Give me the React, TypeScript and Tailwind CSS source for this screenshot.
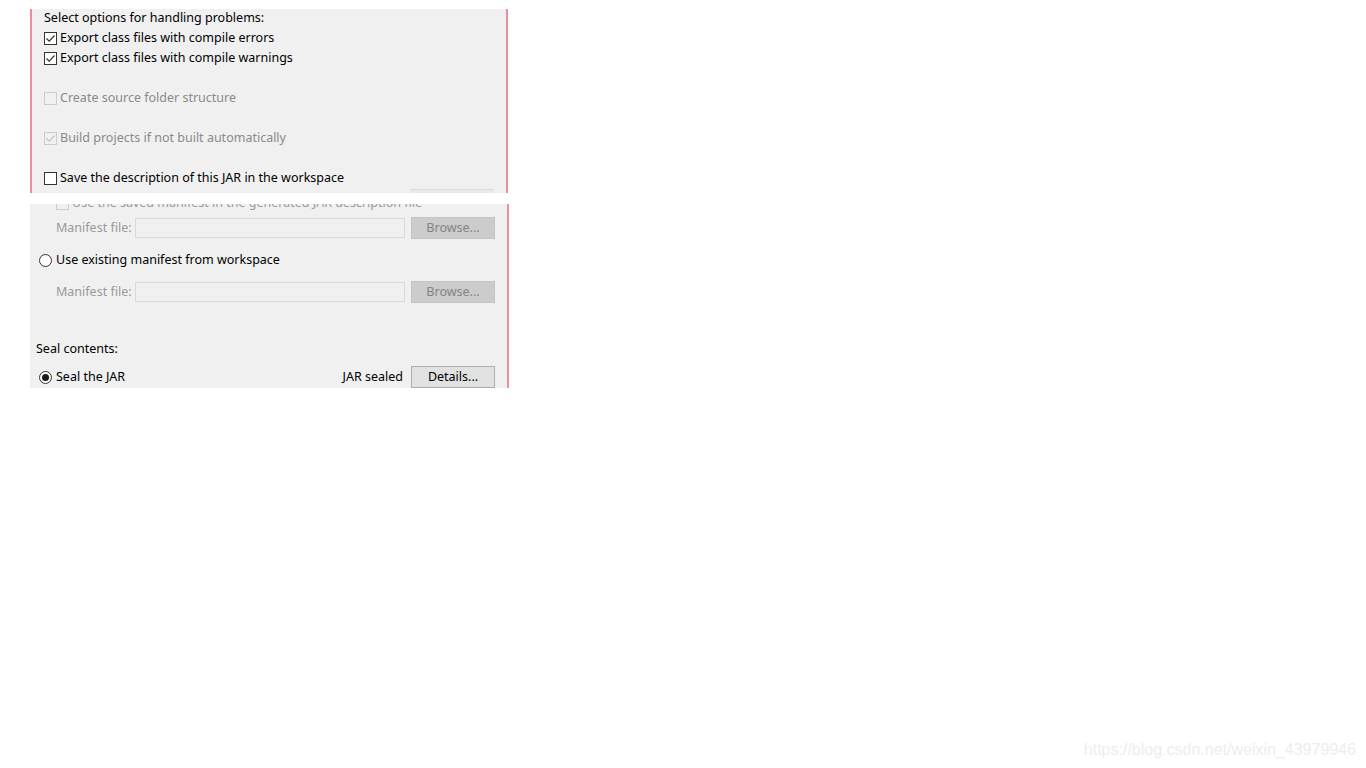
import React from "react";

const ui = { fontFamily: '"Noto Sans", "Open Sans", "Noto Sans CJK SC", sans-serif' };

function CheckBox({ checked, disabled }: { checked?: boolean; disabled?: boolean }) {
    return (
        <span
            className={
                "w-[13px] h-[13px] border flex items-center justify-center shrink-0 " +
                (disabled ? "border-[#cccccc] bg-[#f0f0f0]" : "border-[#333333] bg-white")
            }
        >
            {checked && (
                <svg width="11" height="11" viewBox="0 0 11 11">
                    <path
                        d="M1.5 5.5 L4.2 8.2 L9.5 2.5"
                        fill="none"
                        stroke={disabled ? "#c4c4c4" : "#333333"}
                        strokeWidth="1.2"
                    />
                </svg>
            )}
        </span>
    );
}

function Radio({ checked }: { checked?: boolean }) {
    return (
        <span className="w-[13px] h-[13px] rounded-full border border-[#333333] bg-white flex items-center justify-center shrink-0">
            {checked && <span className="w-[7px] h-[7px] rounded-full bg-[#1a1a1a]" />}
        </span>
    );
}

function CheckRow({ label, checked, disabled }: { label: string; checked?: boolean; disabled?: boolean }) {
    return (
        <div className="h-5 flex items-center gap-[3px] mt-5">
            <CheckBox checked={checked} disabled={disabled} />
            <span className={disabled ? "text-[#8a8a8a]" : "text-black"}>{label}</span>
        </div>
    );
}

function ManifestRow({ className }: { className: string }) {
    return (
        <div className={"h-[22px] flex items-center " + className}>
            <span className="w-[79px] pl-[26px] box-content text-[#9a9a9a] whitespace-nowrap">Manifest file:</span>
            <div className="w-[270px] h-5 border border-[#d9d9d9] bg-[#f0f0f0]" />
            <div className="ml-[6px] w-[84px] h-[22px] border border-[#c4c4c4] bg-[#cccccc] flex items-center justify-center text-[#838383]">
                Browse...
            </div>
        </div>
    );
}

export default function App() {
    return (
        <div className="min-h-screen bg-white relative text-[12.5px]" style={ui}>
            <div className="pt-[9px] pl-[30px]">
                {/* top panel */}
                <div className="w-[478px] h-[184px] bg-[#f0f0f0] border-l-2 border-r-2 border-[#ec8f9b] pl-3 pt-px overflow-hidden">
                    <div className="h-4 flex items-center text-black">Select options for handling problems:</div>
                    <div className="h-5 flex items-center gap-[3px] mt-[2px]">
                        <CheckBox checked />
                        <span>Export class files with compile errors</span>
                    </div>
                    <div className="h-5 flex items-center gap-[3px]">
                        <CheckBox checked />
                        <span>Export class files with compile warnings</span>
                    </div>
                    <CheckRow label="Create source folder structure" disabled />
                    <CheckRow label="Build projects if not built automatically" checked disabled />
                    <CheckRow label="Save the description of this JAR in the workspace" />
                    <div className="mt-px ml-[366px] w-[84px] h-1 border-t border-[#dcdcdc] bg-[#e9e9e9]" />
                </div>

                {/* bottom panel */}
                <div className="mt-[11px] w-[479px] h-[184px] bg-[#f0f0f0] border-r-2 border-[#ec8f9b] pt-px overflow-hidden">
                    <div className="h-5 -mt-[12px] pl-[26px] flex items-center gap-[3px] text-[#9a9a9a]">
                        <CheckBox disabled />
                        <span>Use the saved manifest in the generated JAR description file</span>
                    </div>
                    <ManifestRow className="mt-[4px]" />
                    <div className="h-5 mt-[11px] pl-[9px] flex items-center gap-[4px] text-black">
                        <Radio />
                        <span>Use existing manifest from workspace</span>
                    </div>
                    <ManifestRow className="mt-[11px]" />
                    <div className="h-5 mt-[36px] pl-[6px] flex items-center text-black">Seal contents:</div>
                    <div className="h-[22px] mt-[7px] pl-[9px] flex items-center text-black">
                        <Radio checked />
                        <span className="ml-[4px]">Seal the JAR</span>
                        <span className="ml-auto">JAR sealed</span>
                        <div className="ml-[8px] mr-[12px] w-[84px] h-[22px] border border-[#adadad] bg-[#e1e1e1] flex items-center justify-center">
                            Details...
                        </div>
                    </div>
                </div>
            </div>

            <div
                className="absolute right-[10px] bottom-[6px] text-[16px] text-[#ededed]"
                style={{ fontFamily: '"Liberation Sans", Arial, sans-serif' }}
            >
                https://blog.csdn.net/weixin_43979946
            </div>
        </div>
    );
}
